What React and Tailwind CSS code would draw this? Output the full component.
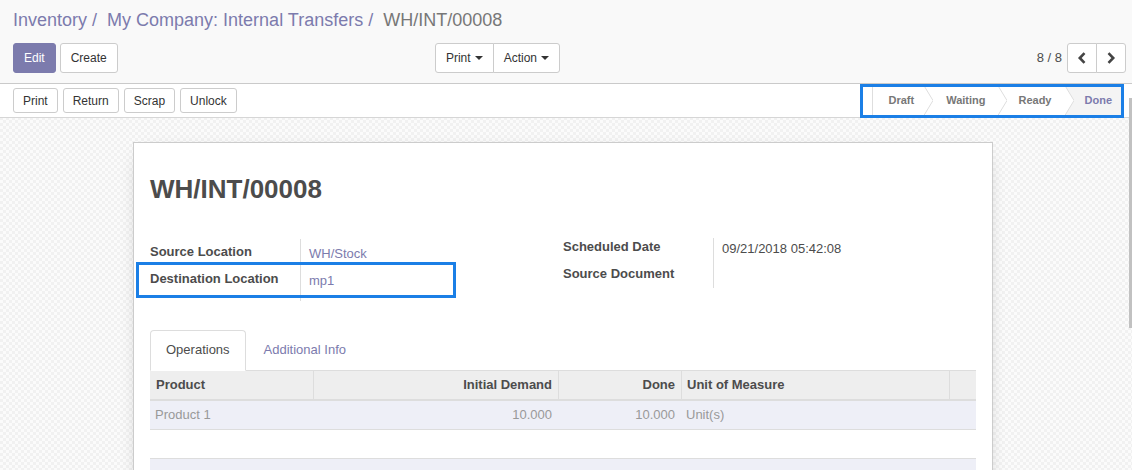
import React from "react";

const Caret = () => (
  <svg width="8" height="4" viewBox="0 0 8 4" className="ml-[4px] inline-block">
    <path d="M0 0h8L4 4z" fill="#333" />
  </svg>
);

const ChevL = () => (
  <svg width="10" height="12" viewBox="0 0 10 12" className="block">
    <polyline points="7.5,1.2 2.8,6 7.5,10.8" fill="none" stroke="#444" strokeWidth="2.6" />
  </svg>
);
const ChevR = () => (
  <svg width="10" height="12" viewBox="0 0 10 12" className="block">
    <polyline points="2.5,1.2 7.2,6 2.5,10.8" fill="none" stroke="#444" strokeWidth="2.6" />
  </svg>
);

const StatusArrow = ({ bg = "#ffffff" }) => (
  <svg width="10" height="33" viewBox="0 0 10 33" className="block shrink-0">
    <rect width="10" height="33" fill={bg} />
    <path d="M0 0 L10 16.5 L0 33 Z" fill="#ffffff" />
    <path d="M0 0 L10 16.5 L0 33" fill="none" stroke="#dedede" strokeWidth="1" />
  </svg>
);

const Btn = ({ children, className = "" }) => (
  <button
    className={
      "h-[30px] px-[10px] text-[12px] leading-[18px] border border-[#cccccc] bg-white text-[#333333] rounded-[3px] flex items-center " +
      className
    }
  >
    {children}
  </button>
);

const SBtn = ({ children }) => (
  <button className="h-[25px] px-[9px] text-[12px] leading-[18px] border border-[#cccccc] bg-white text-[#333333] rounded-[3px] flex items-center">
    {children}
  </button>
);

export default function App() {
  return (
    <div className="relative w-[1132px] h-[470px] overflow-hidden font-['Liberation_Sans',Arial,sans-serif] text-[13px] text-[#4c4c4c] bg-[#f7f7f7] bg-[image:repeating-conic-gradient(#f1f1f1_0_25%,#fbfbfb_0_50%)] bg-[length:6px_6px]">
      {/* Control panel */}
      <div className="bg-[#f9f9f9] border-b border-[#cacaca] pl-[13px] pr-[6px] pt-[8px] pb-[10px]">
        <div className="h-[24px] flex items-center text-[18px] leading-[24px] whitespace-nowrap">
          <span className="text-[#7c7bad]">Inventory</span>
          <span className="text-[#7c7bad] pl-[5px] pr-[10px]">/</span>
          <span className="text-[#7c7bad]">My Company: Internal Transfers</span>
          <span className="text-[#7c7bad] pl-[5px] pr-[10px]">/</span>
          <span className="text-[#777777]">WH/INT/00008</span>
        </div>
        <div className="mt-[11px] h-[30px] flex items-center">
          <div className="w-[547px] flex items-center justify-between">
            <div className="flex items-center gap-[4px]">
              <button className="h-[30px] px-[10px] text-[12px] leading-[18px] border border-[#7c7bad] bg-[#7c7bad] text-white rounded-[3px]">
                Edit
              </button>
              <Btn>Create</Btn>
            </div>
            <div className="flex items-center">
              <Btn className="rounded-r-none">
                Print
                <Caret />
              </Btn>
              <Btn className="rounded-l-none -ml-px">
                Action
                <Caret />
              </Btn>
            </div>
          </div>
          <div className="flex-1 flex items-center justify-end">
            <span className="text-[13px] text-[#4c4c4c] mr-[5px]">8 / 8</span>
            <div className="flex">
              <button className="w-[30px] h-[30px] border border-[#cccccc] bg-white rounded-l-[3px] flex items-center justify-center">
                <ChevL />
              </button>
              <button className="w-[30px] h-[30px] -ml-px border border-[#cccccc] bg-white rounded-r-[3px] flex items-center justify-center">
                <ChevR />
              </button>
            </div>
          </div>
        </div>
      </div>

      {/* Statusbar */}
      <div className="h-[34px] bg-white border-b border-[#d6d6d6] pl-[13px] pr-[11px] flex items-center justify-between">
        <div className="flex items-center gap-[5px]">
          <SBtn>Print</SBtn>
          <SBtn>Return</SBtn>
          <SBtn>Scrap</SBtn>
          <SBtn>Unlock</SBtn>
        </div>
        <div className="relative self-stretch flex items-stretch border-l border-[#dedede] text-[11px] font-bold leading-[33px]">
          <div className="pl-[15px] pr-[9px] text-[#777777]">Draft</div>
          <StatusArrow />
          <div className="pl-[13px] pr-[12px] text-[#777777]">Waiting</div>
          <StatusArrow />
          <div className="pl-[11px] pr-[12px] text-[#777777]">Ready</div>
          <StatusArrow bg="#f4f4f4" />
          <div className="pl-[11px] pr-[9px] bg-[#f4f4f4] text-[#7c7bad]">Done</div>
          <div className="absolute -left-[13px] -right-[3px] top-0 -bottom-[1px] border-[3px] border-[#1b7fe6] pointer-events-none" />
        </div>
      </div>

      {/* Sheet */}
      <div className="relative mt-[24px] ml-[133px] w-[860px] h-[400px] bg-white border border-[#cccccc] shadow-[0_5px_20px_-12px_rgba(0,0,0,0.45)] px-[16px] pt-[32px]">
        <h1 className="h-[29px] text-[26px] leading-[29px] font-bold text-[#4c4c4c]">WH/INT/00008</h1>

        <div className="mt-[34px] grid grid-cols-2 items-start">
          {/* Left group */}
          <div className="mt-[1px] flex">
            <div className="w-[151px] border-r border-[#dddddd] pb-[8px] font-bold">
              <div className="h-[27px] leading-[25px]">Source Location</div>
              <div className="h-[27px] leading-[25px]">Destination Location</div>
            </div>
            <div className="pl-[8px] pt-[2px] text-[#7c7bad]">
              <div className="h-[27px] leading-[25px]">WH/Stock</div>
              <div className="h-[27px] leading-[25px]">mp1</div>
            </div>
          </div>
          {/* Right group */}
          <div className="flex">
            <div className="w-[151px] border-r border-[#dddddd] font-bold">
              <div className="h-[27px] leading-[18px]">Scheduled Date</div>
              <div className="h-[23px] leading-[18px]">Source Document</div>
            </div>
            <div className="pl-[8px] pt-[2px]">
              <div className="leading-[18px]">09/21/2018 05:42:08</div>
            </div>
          </div>
        </div>

        {/* Tabs */}
        <div className="mt-[29px] flex border-b border-[#dddddd]">
          <div className="-mb-px px-[15px] py-[10px] leading-[18px] bg-white border border-[#dddddd] border-b-white rounded-t-[4px] text-[#4c4c4c]">
            Operations
          </div>
          <div className="ml-[2px] px-[15px] py-[10px] leading-[18px] border border-transparent text-[#7c7bad]">
            Additional Info
          </div>
        </div>

        {/* Table */}
        <div className="grid grid-cols-[163px_245px_123px_268px_1fr] bg-[#eeeeee] border-b-2 border-[#dddddd] font-bold h-[30px] box-border">
          <div className="pl-[6px] leading-[28px]">Product</div>
          <div className="border-l border-[#dddddd] pr-[6px] text-right leading-[28px]">Initial Demand</div>
          <div className="border-l border-[#dddddd] pr-[6px] text-right leading-[28px]">Done</div>
          <div className="border-l border-[#dddddd] pl-[5px] leading-[28px]">Unit of Measure</div>
          <div className="border-l border-[#dddddd]" />
        </div>
        <div className="grid grid-cols-[163px_245px_123px_268px_1fr] bg-[#eeeff7] border-b border-[#dddddd] h-[29px] text-[#999999]">
          <div className="pl-[5px] leading-[28px]">Product 1</div>
          <div className="pr-[6px] text-right leading-[28px]">10.000</div>
          <div className="pr-[6px] text-right leading-[28px]">10.000</div>
          <div className="pl-[5px] leading-[28px]">Unit(s)</div>
          <div />
        </div>
        <div className="h-[29px] border-b border-[#dddddd] bg-white" />
        <div className="h-[30px] bg-[#eeeff7]" />

        {/* Annotation */}
        <div className="absolute left-[2px] top-[119px] w-[320px] h-[36px] border-[3px] border-[#1b7fe6] pointer-events-none" />
      </div>

      {/* Scrollbar thumb */}
      <div className="absolute right-0 top-[98px] w-[3px] h-[230px] bg-[#c1c1c1]" />
    </div>
  );
}
